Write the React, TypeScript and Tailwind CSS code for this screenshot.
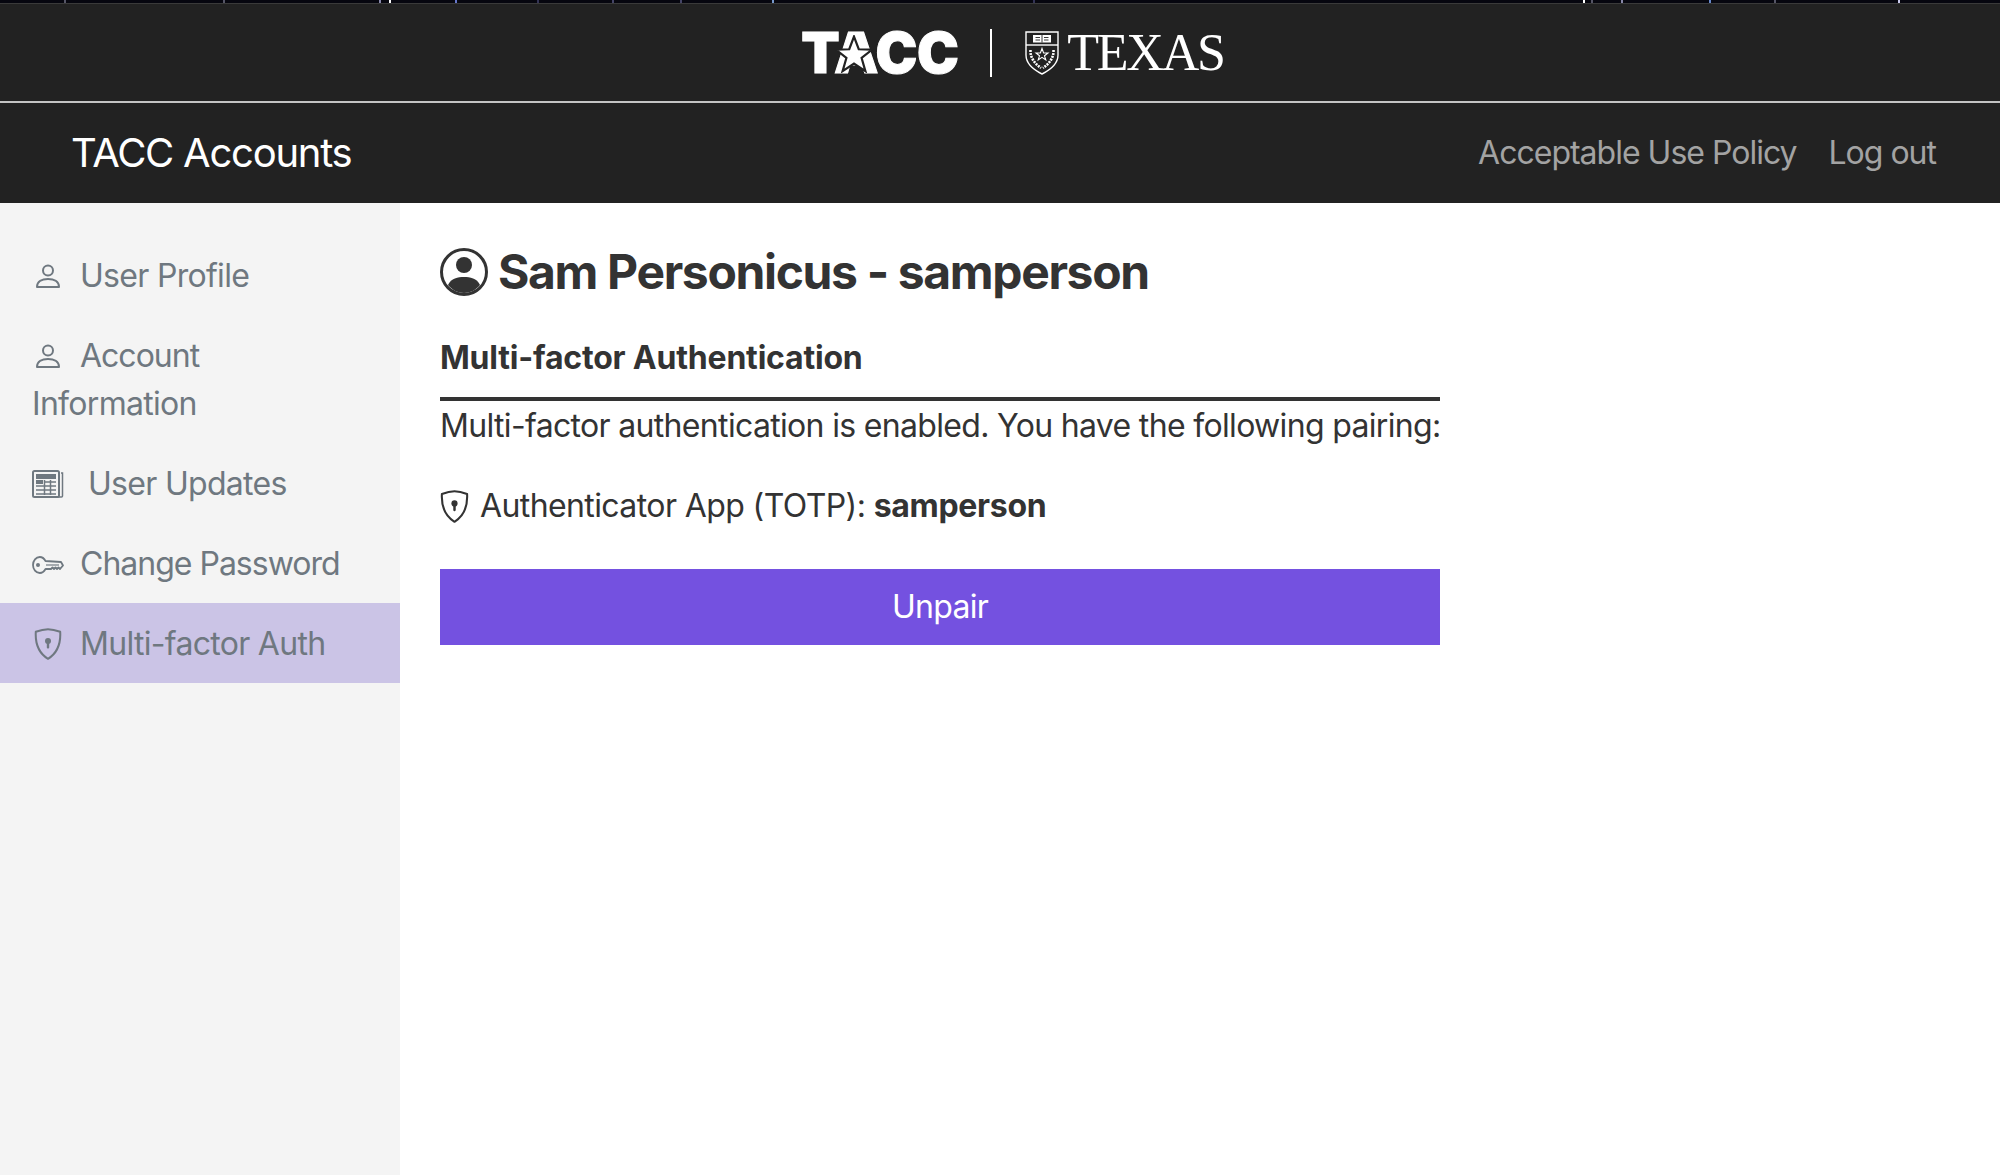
import React from 'react'

const specks = [
  'left-[64px] bg-[#555566]',
  'left-[223px] bg-[#555566]',
  'left-[379px] bg-[#8888aa]',
  'left-[389px] bg-white',
  'left-[455px] bg-[#6677cc]',
  'left-[537px] bg-[#333355]',
  'left-[612px] bg-[#444466]',
  'left-[680px] bg-[#444466]',
  'left-[772px] bg-[#7799cc]',
  'left-[1033px] bg-[#333355]',
  'left-[1591px] bg-[#555566]',
  'left-[1583px] bg-white',
  'left-[1621px] bg-[#8888aa]',
  'left-[1709px] bg-[#6688cc]',
  'left-[1774px] bg-[#555566]',
  'left-[1898px] bg-[#ccccee]',
]

const PersonIcon = () => (
  <svg viewBox="0 0 24 24" className="inline-block w-[24px] h-[24px] ml-[4px] mr-[20px] align-[-1px]" fill="none" stroke="currentColor" strokeWidth="2">
    <circle cx="12" cy="6.5" r="5" />
    <path d="M1 23 C1 17.5 6 15 12 15 C18 15 23 17.5 23 23 Z" strokeLinejoin="round" />
  </svg>
)

const TableIcon = () => (
  <svg viewBox="0 0 32 28" className="inline-block w-[32px] h-[28px] mr-[24px] align-[-3px]" fill="none" stroke="currentColor">
    <path d="M29 3 H30.5 V26 Q30.5 27 29.5 27 H3" strokeWidth="1.5" />
    <rect x="1" y="1" width="26" height="26" rx="1.5" strokeWidth="2" />
    <rect x="4" y="4" width="20" height="5" fill="currentColor" stroke="none" />
    <rect x="4" y="10" width="7" height="4" fill="currentColor" stroke="none" />
    <path d="M4 16 H24 M4 20 H24 M4 24 H24 M12.5 10 V25 M18.5 10 V25 M12 12 H24" strokeWidth="1.5" />
  </svg>
)

const KeyIcon = () => (
  <svg viewBox="0 0 32 18" className="inline-block w-[32px] h-[18px] mr-[16px] align-[1px]" fill="none" stroke="currentColor">
    <path d="M13.5 5 C12.2 2.6 10.2 1 7.8 1 C4 1 1 4.6 1 9 C1 13.4 4 17 7.8 17 C10.2 17 12.2 15.4 13.5 13 H19 L20.5 11.5 L22 13 L23.5 11.5 L25 13 L26.5 11.5 L28 13 L31 9.5 L29 6 Z" strokeLinejoin="round" strokeWidth="1.8" />
    <circle cx="6" cy="9" r="2" fill="currentColor" stroke="none" />
    <path d="M14 9 H27" strokeWidth="1.2" />
  </svg>
)

const ShieldIcon = ({ className }: { className: string }) => (
  <svg viewBox="0 0 28 32" className={className} fill="none" stroke="currentColor" strokeWidth="2">
    <path d="M14 1.2 C10 1.2 5.5 2.4 1.8 3.8 C1.2 14 3 24 14 30.8 C25 24 26.8 14 26.2 3.8 C22.5 2.4 18 1.2 14 1.2 Z" strokeLinejoin="round" />
    <circle cx="14" cy="13" r="3" fill="currentColor" stroke="none" />
    <rect x="12.8" y="14" width="2.4" height="6.5" rx="1" fill="currentColor" stroke="none" />
  </svg>
)

const Star = ({ className }: { className: string }) => (
  <svg viewBox="0 0 24 24" className={className}>
    <path d="M12 1 L15 9 L23.5 9.2 L16.8 14.5 L19.2 22.8 L12 18 L4.8 22.8 L7.2 14.5 L0.5 9.2 L9 9 Z" fill="#fff" stroke="#222" strokeWidth="1.4" />
  </svg>
)

const UtShield = () => (
  <svg viewBox="0 0 34 44" className="w-[34px] h-[44px]" fill="none" stroke="#fff">
    <path d="M1 1 H33 V24 C33 33 25 39 17 43 C9 39 1 33 1 24 Z" strokeWidth="1.4" />
    <path d="M1 14 H33" strokeWidth="1.4" />
    <rect x="8" y="4" width="18" height="7.5" fill="#fff" stroke="none" />
    <path d="M17 4 V11.5 M10.5 6.5 H15 M10.5 9 H15 M19 6.5 H23.5 M19 9 H23.5" stroke="#222" strokeWidth="0.9" />
    <path d="M17 17.5 L18.6 22 L23 22 L19.5 24.8 L20.8 29 L17 26.4 L13.2 29 L14.5 24.8 L11 22 L15.4 22 Z" strokeWidth="1.1" />
    <path d="M5.5 19 C5 26 9 32 16 37 M28.5 19 C29 26 25 32 18 37" strokeWidth="2.6" strokeDasharray="2 1" />
  </svg>
)

const Item = ({ children, active }: { children: React.ReactNode; active?: boolean }) => (
  <li className={`px-8 pt-[17px] pb-[15px] text-[32px] leading-[48px] tracking-[-0.7px] text-[#6f7880] ${active ? 'bg-[#cbc4e6]' : ''}`}>{children}</li>
)

export default function App() {
  return (
    <div className="min-h-screen flex flex-col bg-white font-['Inter','Liberation_Sans',sans-serif] text-[#333333]">
      <div className="relative h-[3px] bg-[#06060f]">
        {specks.map((s) => (
          <span key={s} className={`absolute top-0 h-[3px] w-[2px] ${s}`} />
        ))}
      </div>
      <header className="h-[100px] shrink-0 flex items-center justify-center bg-[#222222] border-t border-b-2 border-t-[#3a3a3a] border-b-[#c4c4c4]">
        <div className="flex items-center ml-[25px]">
          <div className="relative text-white font-black text-[56px] leading-none tracking-[-0.4px] w-[159px] [-webkit-text-stroke:1px_white]">
            TACC
            <Star className="absolute left-[34px] top-[10px] w-[38px] h-[38px]" />
          </div>
          <div className="w-[2px] h-[48px] bg-white ml-[30px] mr-[33px]" />
          <UtShield />
          <div className="ml-[8px] text-white font-['Liberation_Serif',serif] text-[52px] leading-none tracking-[-2.2px]">TEXAS</div>
        </div>
      </header>
      <nav className="h-[100px] shrink-0 flex items-center justify-between bg-[#222222] pl-[71px] pr-[64px]">
        <div className="text-white text-[40px] leading-none tracking-[-1.25px]">TACC Accounts</div>
        <div className="flex gap-8 text-[32px] leading-none tracking-[-1px] text-[#a3a3a3]">
          <span>Acceptable Use Policy</span>
          <span>Log out</span>
        </div>
      </nav>
      <div className="flex flex-1">
        <aside className="w-[400px] shrink-0 bg-[#f4f4f4] pt-8">
          <ul>
            <Item><PersonIcon />User Profile</Item>
            <Item><PersonIcon /><span className="tracking-[-1px]">Account</span> Information</Item>
            <Item><TableIcon />User Updates</Item>
            <Item><KeyIcon /><span className="tracking-[-1px]">Change Password</span></Item>
            <Item active><ShieldIcon className="inline-block w-[28px] h-[32px] ml-[2px] mr-[18px] align-[-5px]" />Multi-factor Auth</Item>
          </ul>
        </aside>
        <main className="pl-10 pt-[41px] w-[1040px]">
          <h1 className="flex items-center text-[48px] leading-[56px] font-bold tracking-[-1.35px]">
            <svg viewBox="0 0 48 48" className="w-[48px] h-[48px] mr-[10px]">
              <circle cx="24" cy="24" r="22.5" fill="none" stroke="#333" strokeWidth="3" />
              <circle cx="24" cy="17" r="8" fill="#333" />
              <path d="M8 37 C11 30 18 29 24 29 C30 29 37 30 40 37 C36 42 30 45 24 45 C18 45 12 42 8 37 Z" fill="#333" />
            </svg>
            Sam Personicus - samperson
          </h1>
          <h2 className="mt-[38px] pb-[19px] border-b-4 border-[#333333] text-[32px] leading-[40px] font-bold tracking-[-0.2px]">Multi-factor Authentication</h2>
          <p className="text-[32px] leading-[48px] mt-[1px] tracking-[-0.67px] whitespace-nowrap">Multi-factor authentication is enabled. You have the following pairing:</p>
          <p className="text-[32px] leading-[48px] mt-[32px] flex items-center tracking-[-0.6px]">
            <ShieldIcon className="w-[29px] h-[33px] mr-[11px]" />
            <span>Authenticator App (TOTP): <b className="tracking-[-0.3px]">samperson</b></span>
          </p>
          <button className="mt-[39px] w-full h-[76px] bg-[#7451e0] text-white text-[32px] tracking-[-0.7px]">Unpair</button>
        </main>
      </div>
    </div>
  )
}
